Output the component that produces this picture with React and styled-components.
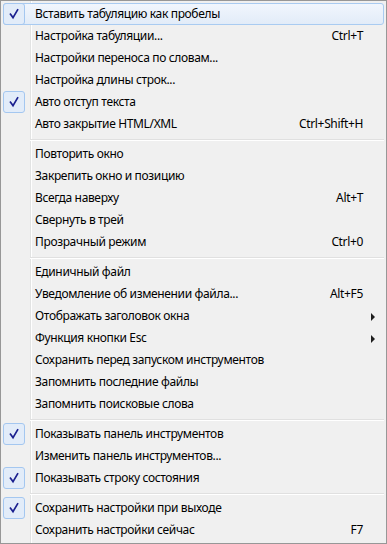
import React from "react";
import styled, { createGlobalStyle, css } from "styled-components";

const Global = createGlobalStyle`
  html, body { margin: 0; padding: 0; background: #ffffff; }
  * { box-sizing: border-box; }
`;

const Menu = styled.div`
  width: 387px;
  height: 544px;
  border: 1px solid #979797;
  padding: 2px;
  font-family: "Noto Sans", "Open Sans", sans-serif;
  font-size: 12px;
  letter-spacing: -0.35px;
  color: #000;
  background: linear-gradient(
    to right,
    #f0f0f0 29px,
    #e2e3e3 29px,
    #e2e3e3 30px,
    #ffffff 30px,
    #ffffff 31px,
    #f0f0f0 31px
  );
  display: flex;
  flex-direction: column;
`;

const Row = styled.div`
  height: 22px;
  display: grid;
  grid-template-columns: 22px 1fr auto 20px;
  align-items: center;
  border: 1px solid transparent;
  border-radius: 3px;
  white-space: nowrap;
  ${(p) =>
    p.$hl &&
    css`
      border-color: #a9cbf1;
      background: linear-gradient(to bottom, #f1f6fd, #e2ecf8);
    `}
`;

const CheckBox = styled.div`
  width: 22px;
  height: 22px;
  margin: -1px 0 0 -1px;
  border-radius: 3px;
  display: flex;
  align-items: center;
  justify-content: center;
  ${(p) =>
    p.$on &&
    css`
      border: 1px solid #a4c7f0;
      background: #e2ecf9;
    `}
`;

const Label = styled.span`
  padding-left: 9px;
  line-height: 20px;
  margin-top: -1px;
`;

const Shortcut = styled.span`
  text-align: right;
  line-height: 20px;
  margin-top: -1px;
`;

const Arrow = styled.span`
  justify-self: start;
  margin-left: 8px;
  width: 0;
  height: 0;
  border-top: 4px solid transparent;
  border-bottom: 4px solid transparent;
  border-left: 4px solid #1e1e1e;
`;

const Separator = styled.div`
  height: 8px;
  padding-top: 4px;
  margin-left: 27px;
  &::before {
    content: "";
    display: block;
    border-top: 1px solid #e0e0e0;
    border-bottom: 1px solid #ffffff;
  }
`;

const Check = () => (
  <svg width="12" height="12" viewBox="0 0 12 12">
    <path
      d="M2.5 6.2 L5 9.6 L9.6 1.8"
      fill="none"
      stroke="#1c2190"
      strokeWidth="1.7"
      strokeLinejoin="miter"
      strokeLinecap="square"
    />
  </svg>
);

const groups = [
  [
    { t: "Вставить табуляцию как пробелы", check: true, hl: true },
    { t: "Настройка табуляции...", k: "Ctrl+T" },
    { t: "Настройки переноса по словам..." },
    { t: "Настройка длины строк..." },
    { t: "Авто отступ текста", check: true },
    { t: "Авто закрытие HTML/XML", k: "Ctrl+Shift+H" },
  ],
  [
    { t: "Повторить окно" },
    { t: "Закрепить окно и позицию" },
    { t: "Всегда наверху", k: "Alt+T" },
    { t: "Свернуть в трей" },
    { t: "Прозрачный режим", k: "Ctrl+0" },
  ],
  [
    { t: "Единичный файл" },
    { t: "Уведомление об изменении файла...", k: "Alt+F5" },
    { t: "Отображать заголовок окна", sub: true },
    { t: "Функция кнопки Esc", sub: true },
    { t: "Сохранить перед запуском инструментов" },
    { t: "Запомнить последние файлы" },
    { t: "Запомнить поисковые слова" },
  ],
  [
    { t: "Показывать панель инструментов", check: true },
    { t: "Изменить панель инструментов..." },
    { t: "Показывать строку состояния", check: true },
  ],
  [
    { t: "Сохранить настройки при выходе", check: true },
    { t: "Сохранить настройки сейчас", k: "F7" },
  ],
];

export default function App() {
  return (
    <>
      <Global />
      <Menu>
        {groups.map((g, gi) => (
          <React.Fragment key={gi}>
            {gi > 0 && <Separator />}
            {g.map((it, i) => (
              <Row key={i} $hl={it.hl}>
                <CheckBox $on={it.check}>{it.check && <Check />}</CheckBox>
                <Label>{it.t}</Label>
                <Shortcut>{it.k || ""}</Shortcut>
                {it.sub ? <Arrow /> : <span />}
              </Row>
            ))}
          </React.Fragment>
        ))}
      </Menu>
    </>
  );
}
